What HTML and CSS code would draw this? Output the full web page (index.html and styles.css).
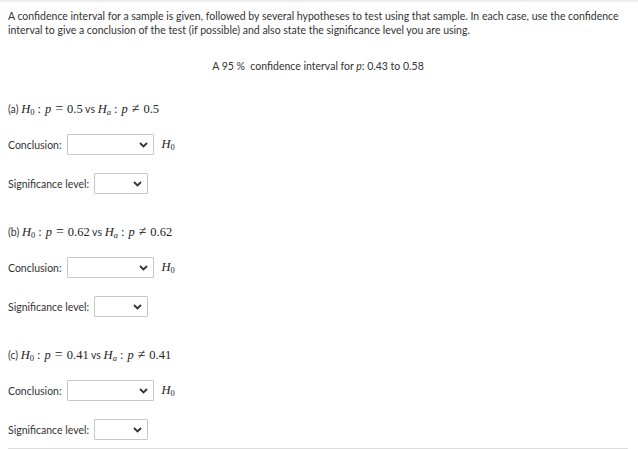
FILE: index.html
```html
<!DOCTYPE html>
<html>
<head>
<meta charset="utf-8">
<link rel="stylesheet" href="styles.css">
</head>
<body>
<div class="wrap">
  <p class="intro">A confidence interval for a sample is given, followed by several hypotheses to test using that sample. In each case, use the confidence interval to give a conclusion of the test (if possible) and also state the significance level you are using.</p>
  <p class="ci">A 95 %&nbsp; confidence interval for <i class="pv">p</i>: 0.43 to 0.58</p>

  <div class="part">
    <p class="hyp">(a) <span class="m"><i>H</i><sub>0</sub><span class="op">:</span><i>p</i><span class="rel">=</span>0.5</span> vs <span class="m"><i>H</i><sub><i>a</i></sub><span class="op">:</span><i>p</i><span class="rel">≠</span>0.5</span></p>
    <div class="row"><span class="lbl">Conclusion:</span><span class="sel wide"><svg width="9" height="6" viewBox="0 0 9 6"><polyline points="1,1 4.5,4.5 8,1" fill="none" stroke="#333" stroke-width="1.8"/></svg></span><span class="m h0"><i>H</i><sub>0</sub></span></div>
    <div class="row"><span class="lbl">Significance level:</span><span class="sel narrow"><svg width="9" height="6" viewBox="0 0 9 6"><polyline points="1,1 4.5,4.5 8,1" fill="none" stroke="#333" stroke-width="1.8"/></svg></span></div>
  </div>

  <div class="part">
    <p class="hyp">(b) <span class="m"><i>H</i><sub>0</sub><span class="op">:</span><i>p</i><span class="rel">=</span>0.62</span> vs <span class="m"><i>H</i><sub><i>a</i></sub><span class="op">:</span><i>p</i><span class="rel">≠</span>0.62</span></p>
    <div class="row"><span class="lbl">Conclusion:</span><span class="sel wide"><svg width="9" height="6" viewBox="0 0 9 6"><polyline points="1,1 4.5,4.5 8,1" fill="none" stroke="#333" stroke-width="1.8"/></svg></span><span class="m h0"><i>H</i><sub>0</sub></span></div>
    <div class="row"><span class="lbl">Significance level:</span><span class="sel narrow"><svg width="9" height="6" viewBox="0 0 9 6"><polyline points="1,1 4.5,4.5 8,1" fill="none" stroke="#333" stroke-width="1.8"/></svg></span></div>
  </div>

  <div class="part">
    <p class="hyp">(c) <span class="m"><i>H</i><sub>0</sub><span class="op">:</span><i>p</i><span class="rel">=</span>0.41</span> vs <span class="m"><i>H</i><sub><i>a</i></sub><span class="op">:</span><i>p</i><span class="rel">≠</span>0.41</span></p>
    <div class="row"><span class="lbl">Conclusion:</span><span class="sel wide"><svg width="9" height="6" viewBox="0 0 9 6"><polyline points="1,1 4.5,4.5 8,1" fill="none" stroke="#333" stroke-width="1.8"/></svg></span><span class="m h0"><i>H</i><sub>0</sub></span></div>
    <div class="row"><span class="lbl">Significance level:</span><span class="sel narrow"><svg width="9" height="6" viewBox="0 0 9 6"><polyline points="1,1 4.5,4.5 8,1" fill="none" stroke="#333" stroke-width="1.8"/></svg></span></div>
  </div>
  <div class="endline"></div>
</div>
</body>
</html>
```

FILE: styles.css
```css
html, body {
  margin: 0;
  padding: 0;
  background: #fff;
}
body {
  font-family: Lato, "Liberation Sans", sans-serif;
  font-size: 10.5px;
  line-height: 14px;
  color: #333;
}
.wrap {
  border-top: 2px solid #ececec;
  padding: 0 10px 0 8px;
}
.intro {
  margin: 7px 0 0 0;
  height: 28px;
}
.ci {
  margin: 22px 0 0 0;
  height: 14px;
  text-align: center;
}
.pv {
  font-style: italic;
}
.part {
  display: flex;
  flex-direction: column;
}
.hyp {
  margin: 29px 0 0 0;
  height: 14px;
  white-space: nowrap;
}
.part + .part .hyp {
  margin-top: 31px;
}
.m {
  font-family: "Liberation Serif", "DejaVu Serif", serif;
  font-size: 12.5px;
  line-height: 1;
  color: #222;
}
.m i {
  font-style: italic;
}
.m sub {
  font-size: 8.5px;
  line-height: 0;
  vertical-align: -2px;
}
.op {
  margin: 0 4px 0 3px;
}
.rel {
  font-size: 14px;
  margin: 0 4px;
}
.row {
  display: flex;
  align-items: center;
  margin-top: 18px;
  height: 21px;
}
.lbl {
  margin-right: 5px;
}
.sel {
  box-sizing: border-box;
  height: 21px;
  border: 1px solid #c8c8c8;
  border-radius: 1px;
  background: #fff;
  display: flex;
  align-items: center;
  justify-content: flex-end;
  padding-right: 5px;
}
.sel svg {
  display: block;
}
.wide {
  width: 87px;
}
.narrow {
  width: 54px;
}
.h0 {
  margin-left: 8px;
}
.endline {
  margin-top: 8px;
  border-top: 1px solid #dcdcdc;
}
```
